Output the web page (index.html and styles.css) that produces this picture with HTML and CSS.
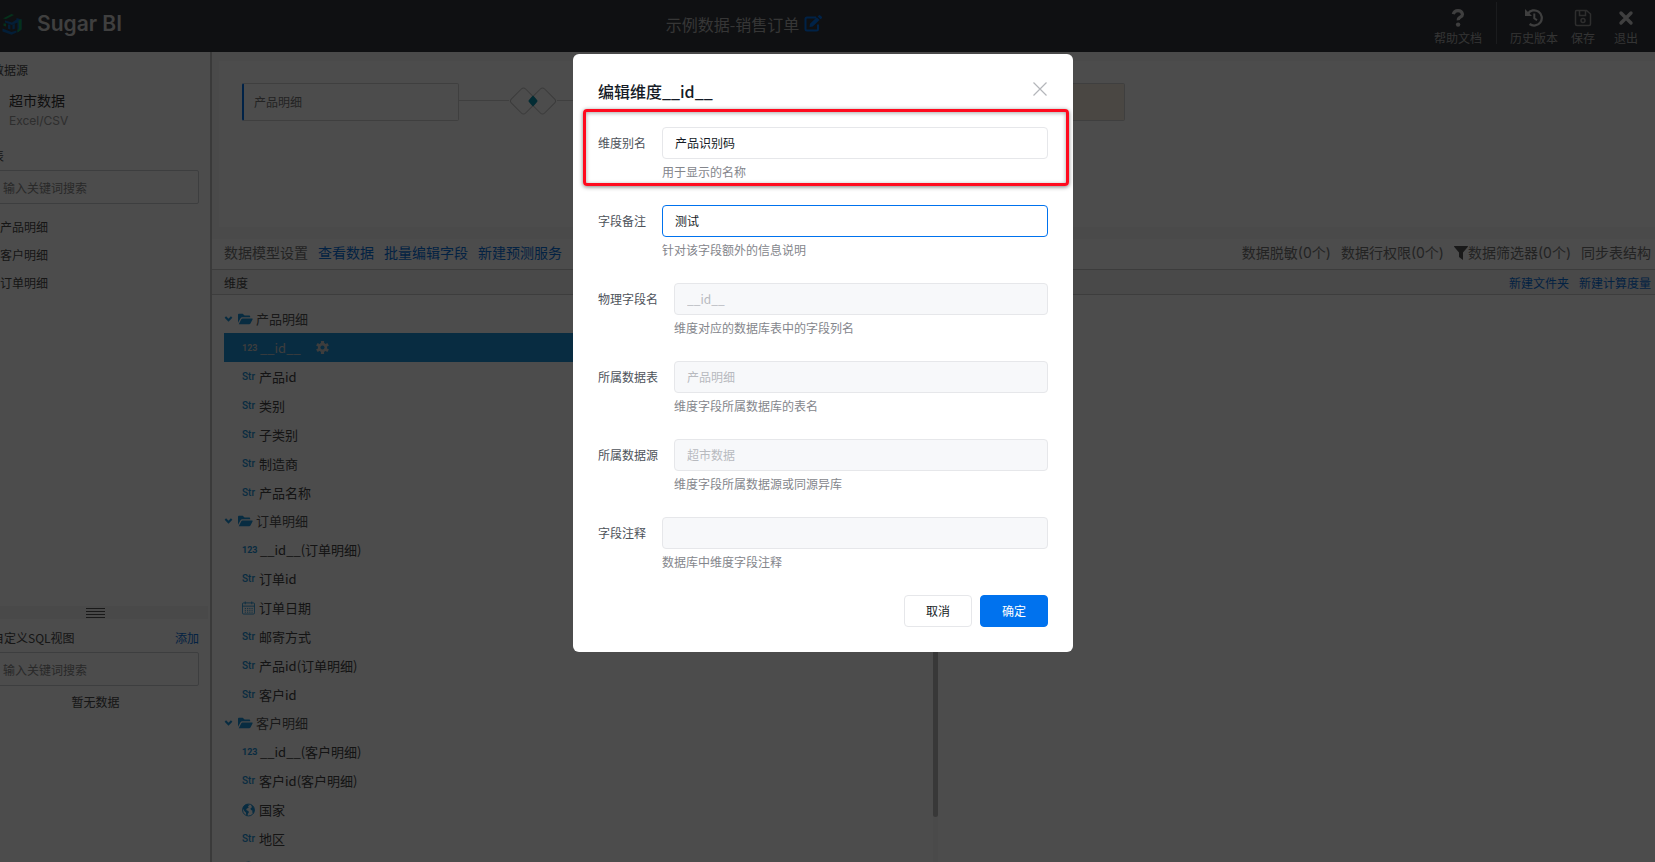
FILE: index.html
```html
<!DOCTYPE html>
<html lang="zh-CN">
<head>
<meta charset="utf-8">
<title>Sugar BI</title>
<link rel="stylesheet" href="styles.css">
</head>
<body>
<svg class="sprite" aria-hidden="true">
  <symbol id="caret" viewBox="0 0 10 8"><path d="M1.500 1.800 5 5.400 8.500 1.800" fill="none" stroke="currentColor" stroke-width="2.200"/></symbol>
  <symbol id="folder" viewBox="0 0 16 12"><path d="M0 10V1.500Q0 .5 1 .5H5L7 2.300H12Q13 2.300 13 3.300V4.200H4.500Q3.300 4.200 2.700 5.200Z"/><path d="M.8 11.500 3.500 6.300Q3.900 5.500 4.800 5.500H15Q16 5.500 15.500 6.400L13.300 10.700Q12.800 11.500 12 11.500Z"/></symbol>
  <symbol id="cal" viewBox="0 0 14 14"><g fill="none" stroke="currentColor" stroke-width=".9"><rect x=".5" y="1.500" width="13" height="12" rx="1.200"/><path d="M.5 5H13.500M3.500 0V3M10.500 0V3"/><path d="M3 7.500H11.500M3 9.500H11.500M3 11.500H11.500" stroke-dasharray="1.300 1.100"/></g></symbol>
  <symbol id="globe" viewBox="0 0 14 14"><circle cx="7" cy="7" r="6.400" fill="none" stroke="currentColor" stroke-width="1"/><path d="M.8 5Q2 1.200 6 .6L8 1.500 6.500 3 7.200 4.500 5.200 5.500 4.500 7 6.800 8.200 7.500 9.500 6.300 11 6 13.300 4.500 12.800 4.300 10 2.500 8.200ZM9.500 1.200 12.500 3.500 13.500 7.500 12.300 11 11 9.500 11.300 7.800 9.500 6.800 9.200 5 10.800 4Z"/></symbol>
</svg>
<div class="app">
  <header class="topbar">
    <div class="brand">
      <svg class="brand-logo" viewBox="0 0 20 21"><path d="M1 4.500 9.500 0 12 1 4 5Z" fill="#12a35c"/><path d="M3 6.500 10 8.500 14.500 5.500V4L19.500 5.500V15.500L15.500 18.500V8.500L10 11 3 8.500Z" fill="#0a64b8"/><path d="M16.500 6.500 19.500 5V15.500L15.500 18.500V16L17 14.500Z" fill="#12a35c"/><path d="M.5 14.500 9.500 18 14.500 16.500V18.500L9.500 20.800.5 17.500ZM6 10.500H8.300V15.500L6 14.800ZM10.500 10.800 12.800 10V14.800L10.500 15.500Z" fill="#0a64b8"/><path d="M1.500 9.500H4V12.500L1.500 11.800Z" fill="#12a35c"/></svg>
      <span class="brand-name">Sugar BI</span>
    </div>
    <div class="doc-title">
      <span>示例数据-销售订单</span>
      <button class="edit" aria-label="编辑名称"><svg viewBox="0 0 19 17"><path d="M12 2.500H3Q1.500 2.500 1.500 4V14Q1.500 15.500 3 15.500H12.500Q14 15.500 14 14V9.500" fill="none" stroke="currentColor" stroke-width="2"/><path d="M5.500 12 6 8.800 12.800 2.200 15.500 4.900 8.700 11.500ZM13.700 1.400 15 .3Q15.700-.2 16.300.4L17.800 1.800Q18.400 2.500 17.800 3.200L16.500 4.200Z" fill="currentColor"/></svg></button>
    </div>
    <nav class="actions">
      <button class="action help"><svg viewBox="0 0 18 18"><path d="M4.300 5.200Q5.200 1.600 9 1.600T13.500 5.200Q13.500 7 11.300 8.200T9.300 11.200" fill="none" stroke="currentColor" stroke-width="3.200"/><circle cx="9.100" cy="15.600" r="2.200" fill="currentColor"/></svg>帮助文档</button>
      <button class="action"><svg viewBox="0 0 18 18"><path d="M2.800 4.800A7.600 7.600 0 1 1 4.600 15" fill="none" stroke="currentColor" stroke-width="2.300"/><path d="M0 0V7H7Z" fill="currentColor"/><path d="M9.300 4.500V9.200L12 11.200" fill="none" stroke="currentColor" stroke-width="2"/></svg>历史版本</button>
      <button class="action"><svg class="dim" viewBox="0 0 18 18"><path d="M2.500 1.500H12.500L16.500 5V15Q16.500 16.500 15 16.500H3Q1.500 16.500 1.500 15V3Q1.500 1.500 2.500 1.500ZM5.500 2V6.500H11.500V2" fill="none" stroke="currentColor" stroke-width="1.500"/><circle cx="9" cy="11.500" r="2" fill="none" stroke="currentColor" stroke-width="1.500"/></svg>保存</button>
      <button class="action exit"><svg viewBox="0 0 18 18"><path d="M4 4 14 14M14 4 4 14" stroke="currentColor" stroke-width="3.400" stroke-linecap="round"/></svg>退出</button>
    </nav>
  </header>

  <div class="body">
    <aside class="sidebar">
      <section class="side-top">
        <h2 class="side-title">数据源</h2>
        <div class="source"><div class="source-name">超市数据</div><div class="source-type">Excel/CSV</div></div>
        <label class="side-title" for="q1">表</label>
        <input class="search" id="q1" type="text" placeholder="输入关键词搜索">
        <ul class="tables"><li>产品明细</li><li>客户明细</li><li>订单明细</li></ul>
      </section>
      <div class="handle"><svg viewBox="0 0 19 10"><path d="M0 .5H19M0 3.500H19M0 6.500H19M0 9.500H19" stroke="#555" stroke-width="1"/></svg></div>
      <section class="side-bottom">
        <div class="sql-head"><label for="q2">自定义SQL视图</label><a href="#">添加</a></div>
        <input class="search" id="q2" type="text" placeholder="输入关键词搜索">
        <p class="empty">暂无数据</p>
      </section>
    </aside>

    <main class="main">
      <div class="canvas-wrap">
        <div class="canvas">
          <div class="node">产品明细</div>
          <div class="link"></div>
          <svg class="join" viewBox="0 0 48 30"><g fill="none" stroke="#c4c4c4"><rect x="4.500" y="5" width="20" height="20" rx="3" transform="rotate(45 14.500 15)"/><rect x="23.500" y="5" width="20" height="20" rx="3" transform="rotate(45 33.500 15)"/></g><path d="M24 10.500 27.800 15 24 19.500 20.200 15Z" fill="#0a94ae" stroke="#0a94ae" stroke-width="1.500" stroke-linejoin="round"/></svg>
          <div class="link grow"></div>
          <div class="node warm"></div>
        </div>
      </div>
      <div class="toolbar">
        <span>数据模型设置</span><a href="#">查看数据</a><a href="#">批量编辑字段</a><a href="#">新建预测服务</a>
        <span class="push">数据脱敏(0个)</span><span>数据行权限(0个)</span>
        <span class="filter"><svg viewBox="0 0 14 14"><path d="M.3 0H13.700Q14.200.5 13.700 1L9 6.500V14L5 11V6.500L.3 1Q-.2.5.3 0Z" fill="currentColor"/></svg>数据筛选器(0个)</span><span>同步表结构</span>
      </div>
      <div class="colhead"><span>维度</span><a class="push" href="#">新建文件夹</a><a href="#">新建计算度量</a></div>
      <div class="fields">
        <div class="dims">
          <ul class="tree">
            <li class="folder"><svg class="caret"><use href="#caret"/></svg><svg class="fi"><use href="#folder"/></svg>产品明细</li>
            <li class="leaf on"><i class="num">123</i>__id__<svg class="gear" viewBox="0 0 14 14"><circle cx="7" cy="7" r="3.600" fill="none" stroke="currentColor" stroke-width="2.800"/><path d="M7 0V14M.95 3.500 13.050 10.500M.95 10.500 13.050 3.500" stroke="currentColor" stroke-width="3.400"/><circle cx="7" cy="7" r="2.200" fill="#1b93d9"/></svg></li>
            <li class="leaf"><i class="str">Str</i>产品id</li>
            <li class="leaf"><i class="str">Str</i>类别</li>
            <li class="leaf"><i class="str">Str</i>子类别</li>
            <li class="leaf"><i class="str">Str</i>制造商</li>
            <li class="leaf"><i class="str">Str</i>产品名称</li>
            <li class="folder"><svg class="caret"><use href="#caret"/></svg><svg class="fi"><use href="#folder"/></svg>订单明细</li>
            <li class="leaf"><i class="num">123</i>__id__(订单明细)</li>
            <li class="leaf"><i class="str">Str</i>订单id</li>
            <li class="leaf"><svg class="ic"><use href="#cal"/></svg>订单日期</li>
            <li class="leaf"><i class="str">Str</i>邮寄方式</li>
            <li class="leaf"><i class="str">Str</i>产品id(订单明细)</li>
            <li class="leaf"><i class="str">Str</i>客户id</li>
            <li class="folder"><svg class="caret"><use href="#caret"/></svg><svg class="fi"><use href="#folder"/></svg>客户明细</li>
            <li class="leaf"><i class="num">123</i>__id__(客户明细)</li>
            <li class="leaf"><i class="str">Str</i>客户id(客户明细)</li>
            <li class="leaf"><svg class="ic"><use href="#globe"/></svg>国家</li>
            <li class="leaf"><i class="str">Str</i>地区</li>
            <li class="leaf"><svg class="ic"><use href="#globe"/></svg>城市</li>
          </ul>
          <div class="track"><div class="thumb"></div></div>
        </div>
        <div class="measures"></div>
      </div>
    </main>
  </div>
</div>

<div class="overlay">
  <form class="modal" role="dialog" aria-labelledby="mt">
    <div class="modal-head"><h1 id="mt">编辑维度__id__</h1><button type="button" class="close" aria-label="关闭"><svg viewBox="0 0 14 14"><path d="M.5.5 13.500 13.500M13.500.5.5 13.500" stroke="#b4b6ba" stroke-width="1.200"/></svg></button></div>
    <div class="field marked"><label for="f1">维度别名</label><div class="control"><input id="f1" type="text" value="产品识别码"><p>用于显示的名称</p></div></div>
    <div class="field"><label for="f2">字段备注</label><div class="control"><input id="f2" class="focus" type="text" value="测试"><p>针对该字段额外的信息说明</p></div></div>
    <div class="field"><label for="f3">物理字段名</label><div class="control"><input id="f3" type="text" value="__id__" disabled><p>维度对应的数据库表中的字段列名</p></div></div>
    <div class="field"><label for="f4">所属数据表</label><div class="control"><input id="f4" type="text" value="产品明细" disabled><p>维度字段所属数据库的表名</p></div></div>
    <div class="field"><label for="f5">所属数据源</label><div class="control"><input id="f5" type="text" value="超市数据" disabled><p>维度字段所属数据源或同源异库</p></div></div>
    <div class="field"><label for="f6">字段注释</label><div class="control"><input id="f6" type="text" value="" disabled><p>数据库中维度字段注释</p></div></div>
    <div class="modal-foot"><button type="button" class="btn">取消</button><button type="button" class="btn primary">确定</button></div>
  </form>
</div>
</body>
</html>
```
FILE: styles.css
```css
* { box-sizing: border-box; }
html, body { height: 100%; }
body {
  margin: 0;
  overflow: hidden;
  color: #4a4a4a;
  font: 12px/18px "Noto Sans CJK SC", sans-serif;
}
h1, h2, p, ul { margin: 0; padding: 0; font-weight: 400; }
ul { list-style: none; }
a { color: #0a72e0; text-decoration: none; }
button, input { font: inherit; }
svg { display: block; flex: none; }
.sprite { position: absolute; width: 0; height: 0; }

.app { height: 100vh; display: flex; flex-direction: column; background: #fdfdfd; }

/* top bar */
.topbar {
  flex: none;
  height: 52px;
  display: flex;
  align-items: center;
  background: #32363c;
  color: #d2d2d2;
}
.topbar button { border: 0; padding: 0; background: none; color: inherit; }
.brand { display: flex; align-items: center; gap: 15px; padding: 0 0 4px 2px; }
.brand-logo { width: 20px; height: 21px; }
.brand-name { font: 600 21px/30px Inter, sans-serif; }
.doc-title {
  flex: 1;
  display: flex;
  justify-content: center;
  align-items: center;
  gap: 5px;
  padding: 0 67px 5px 0;
  font-size: 16px;
  line-height: 24px;
  color: #b4b4b4;
}
.topbar .edit { color: #0072ee; }
.edit svg { width: 19px; height: 17px; }
.actions { align-self: stretch; display: flex; gap: 13px; padding: 2px 17px 8px 0; }
.topbar .action {
  display: flex;
  flex-direction: column;
  align-items: center;
  gap: 2px;
  padding-top: 7px;
  line-height: 18px;
  color: #adadad;
}
.action svg { width: 18px; height: 18px; color: #d2d2d2; }
.action .dim { color: #999; }
.topbar .help { padding-right: 14px; border-right: 1px solid #5c6066; }
.topbar .exit { padding-left: 6px; }

.body { flex: 1; min-height: 0; display: flex; }

/* sidebar, scrolled partly past the window edge */
.sidebar {
  flex: none;
  width: 232px;
  margin-left: -20px;
  display: flex;
  flex-direction: column;
  border-right: 2px solid #c4c4c4;
}
.side-top { flex: 1; padding: 9px 11px 9px 12px; }
.side-title { display: block; font-size: 12px; line-height: 18px; }
.source { padding: 11px 17px 16px; }
.source-name { font-size: 14px; line-height: 21px; color: #333; }
.source-type { color: #999; font-family: Inter, sans-serif; line-height: 20px; }
.search {
  display: block;
  width: 100%;
  height: 34px;
  margin-top: 5px;
  padding: 0 10px;
  border: 1px solid #cdd0d4;
  border-radius: 2px;
  background: none;
}
.search::placeholder { color: #8a8a8a; opacity: 1; }
.tables { padding: 9px 8px; line-height: 28px; }
.handle { display: flex; justify-content: center; align-items: center; height: 13px; margin-right: 2px; padding-left: 2px; background: #f4f4f4; }
.handle svg { width: 19px; height: 10px; }
.side-bottom { flex: 0 0 30%; padding: 10px 11px 10px 12px; }
.sql-head { display: flex; justify-content: space-between; }
.empty { padding-top: 7px; text-align: center; }

/* work area */
.main { flex: 1; min-width: 0; display: flex; flex-direction: column; }
.canvas-wrap { padding: 9px 0 12px 7px; background: #f8f8f8; }
.canvas { display: flex; align-items: flex-start; height: 166px; padding: 22px 23px; background: #fdfdfd; }
.node {
  flex: none;
  width: 217px;
  height: 38px;
  padding-left: 10px;
  border: 1px solid #d4d4d4;
  border-left: 2px solid #0072ee;
  border-radius: 2px;
  line-height: 36px;
  color: #777;
}
.node.warm { margin-right: 507px; border-left: 1px solid #d8d0c0; background: #f8eee0; }
.link { flex: none; width: 50px; height: 1px; margin-top: 17px; background: #d4d4d4; }
.link.grow { flex: 1; }
.join { width: 48px; height: 30px; margin-top: 3px; }
.toolbar, .colhead { display: flex; align-items: center; padding: 0 4px 0 12px; gap: 10px; }
.toolbar {
  height: 31px;
  padding-bottom: 2px;
  border-bottom: 1px solid #c8c8c8;
  font-family: Inter, "Noto Sans CJK SC", sans-serif;
  font-size: 14px;
  color: #777;
}
.push { margin-left: auto; }
.filter { display: flex; align-items: center; }
.filter svg { width: 14px; height: 14px; color: #555; }
.colhead { height: 25px; padding-top: 1px; border-bottom: 1px solid #ccc; background: #f3f3f3; }
.fields { flex: 1; min-height: 0; display: flex; }
.dims { flex: none; width: 726px; display: flex; overflow: hidden; }
.tree { flex: 1; padding: 10px 0 0 12px; font-size: 13px; }
.folder, .leaf { display: flex; align-items: center; }
.folder { height: 28px; color: #555; }
.folder svg, .leaf svg { color: #1b93d9; fill: currentColor; }
.caret { width: 9px; height: 8px; margin-right: 5px; }
.fi { width: 15px; height: 12px; margin-right: 3px; }
.leaf { height: 29px; padding-left: 18px; color: #444; }
.leaf i { width: 17px; font-style: normal; color: #1b93d9; }
.leaf .str { font: 500 10px/18px Roboto, sans-serif; }
.leaf .num { width: 18px; font: 700 9px/18px Roboto, sans-serif; }
.ic { width: 13px; height: 14px; margin-right: 4px; }
.leaf.on { background: #1b93d9; color: #ccc; }
.leaf.on i, .leaf.on svg { color: #ccc; }
.leaf .gear { width: 13px; height: 13px; margin-left: 15px; }
.track { width: 5px; background: #f9f9f9; }
.thumb { height: 92%; border-radius: 3px; background: #bbb; }
.measures { flex: 1; }

/* dialog */
.overlay {
  position: fixed;
  inset: 0 0 0 -9px;
  display: flex;
  justify-content: center;
  align-items: flex-start;
  padding-top: 54px;
  background: rgba(0, 0, 0, .7);
}
.modal { width: 500px; padding: 25px; border-radius: 6px; background: #fff; color: #4d525a; }
.modal-head { display: flex; justify-content: space-between; height: 48px; }
.modal-head h1 { font-size: 16px; line-height: 24px; font-weight: 500; color: #151b26; }
.close { height: 14px; margin: 3px 1px 0 0; padding: 0; border: 0; background: none; }
.close svg { width: 14px; height: 14px; }
.field { position: relative; display: flex; gap: 16px; height: 78px; }
.field label { line-height: 32px; }
.control { flex: 1; }
.control input {
  display: block;
  width: 100%;
  height: 32px;
  padding: 0 12px 1px;
  border: 1px solid #e6e7ea;
  border-radius: 4px;
  outline: 0;
  background: #fff;
  color: #151b26;
}
.control input:disabled { background: #f7f8fa; color: #b8babf; }
.control input.focus { border-color: #0072ee; }
.control p { padding-top: 3px; line-height: 20px; color: #84868c; }
.marked::after {
  content: "";
  position: absolute;
  inset: -18px -21px 19px -15px;
  border: 3px solid #ff0a1e;
  border-radius: 4px;
  box-shadow: 0 1px 4px rgba(0, 0, 0, .5), inset 0 1px 4px rgba(0, 0, 0, .35);
  pointer-events: none;
}
.modal-foot { display: flex; justify-content: flex-end; gap: 8px; }
.btn { width: 68px; height: 32px; padding: 0; border: 1px solid #e6e7ea; border-radius: 4px; background: #fff; color: #151b26; }
.btn.primary { border-color: #0072ee; background: #0072ee; color: #fff; }
```
